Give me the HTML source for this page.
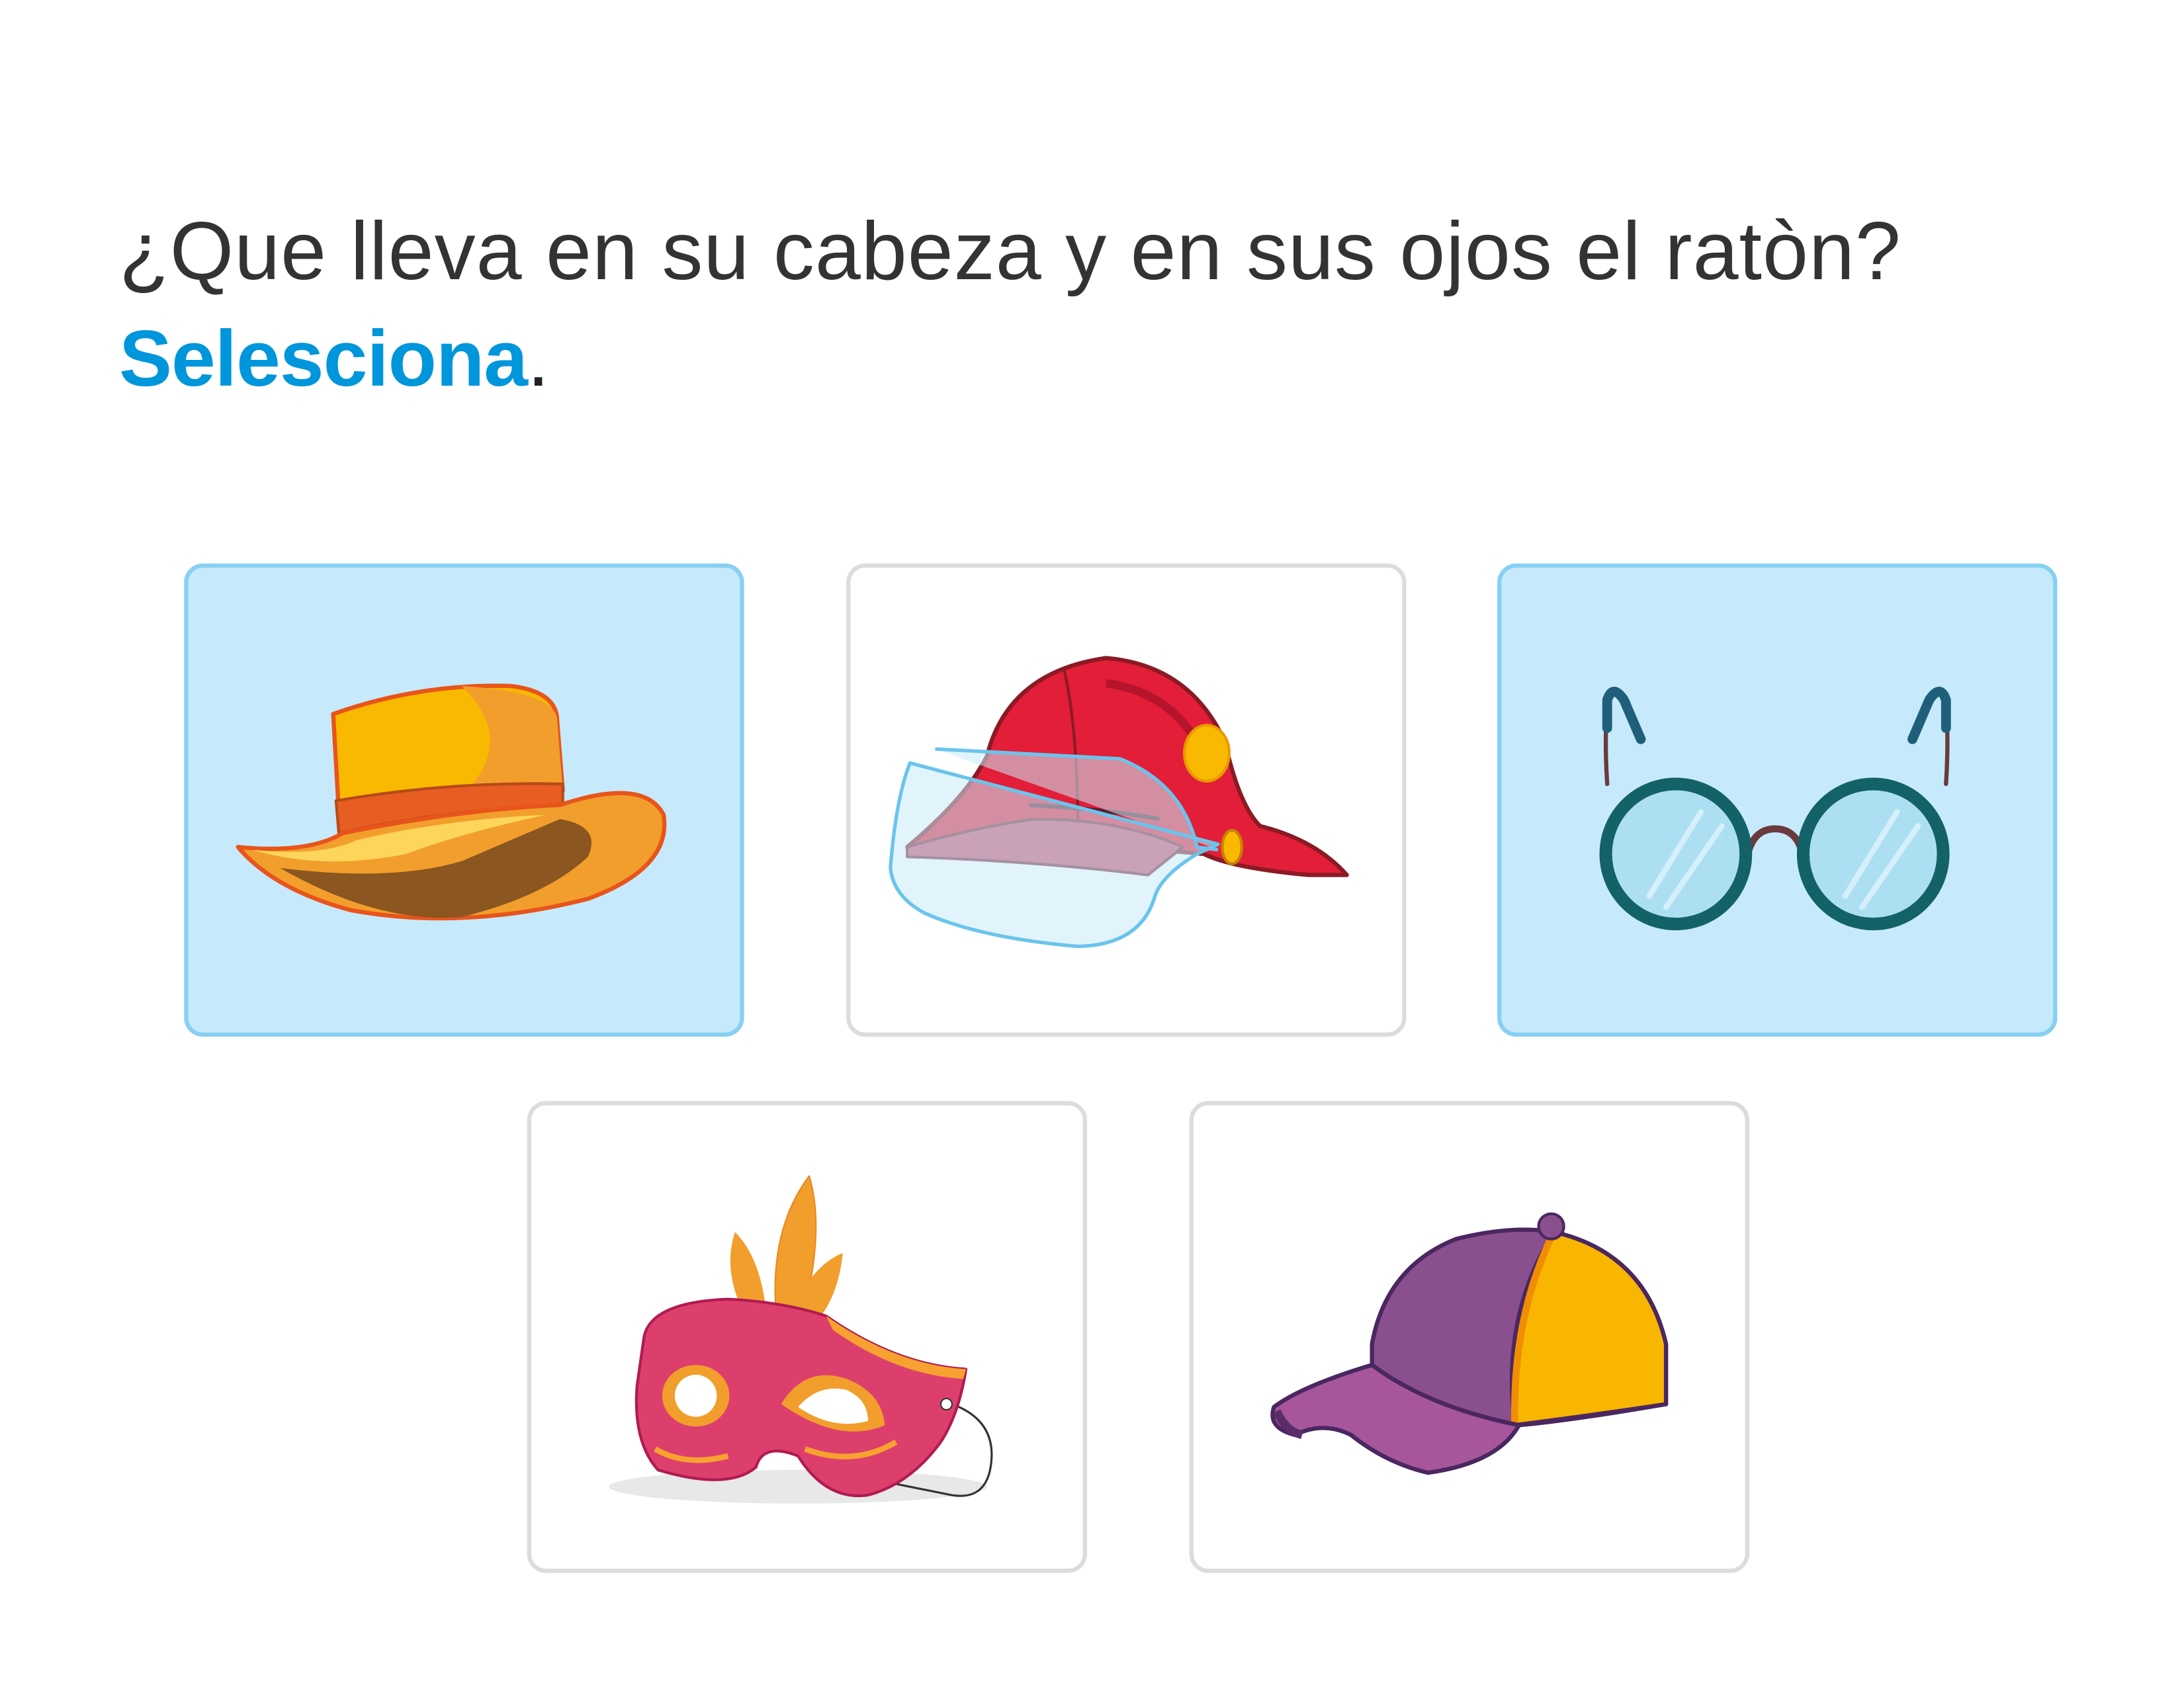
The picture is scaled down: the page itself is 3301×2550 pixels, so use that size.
<!DOCTYPE html>
<html><head><meta charset="utf-8"><style>
html,body{margin:0;padding:0;background:#fff;}
body{width:3301px;height:2550px;position:relative;overflow:hidden;font-family:"Liberation Sans",sans-serif;}
.q{position:absolute;left:180px;top:300px;font-size:124px;color:#333;line-height:160px;white-space:nowrap;letter-spacing:1px;}
.s{position:absolute;left:180px;top:462px;font-size:120px;line-height:160px;font-weight:bold;color:#0096db;white-space:nowrap;letter-spacing:-1px;}
.s span{color:#222;font-weight:normal;}
svg{position:absolute;left:0;top:0;}
</style></head><body>
<svg width="3301" height="2550" viewBox="0 0 1560 1205" xmlns="http://www.w3.org/2000/svg">
<rect x="133" y="404" width="397" height="335" rx="12" fill="#c6eafb" stroke="#87d0f2" stroke-width="3"/>
<rect x="606" y="404" width="397" height="335" rx="12" fill="#fff" stroke="#dcdcdc" stroke-width="3"/>
<rect x="1071" y="404" width="397" height="335" rx="12" fill="#c6eafb" stroke="#87d0f2" stroke-width="3"/>
<rect x="378" y="788" width="397" height="334" rx="12" fill="#fff" stroke="#dcdcdc" stroke-width="3"/>
<rect x="851" y="788" width="397" height="334" rx="12" fill="#fff" stroke="#dcdcdc" stroke-width="3"/>

<g stroke-linejoin="round">
<path d="M238 510 Q300 488 365 490 Q398 494 398 515 L402 565 L242 580 Z" fill="#f9b900" stroke="#e8541b" stroke-width="3"/>
<path d="M330 490 Q398 494 398 515 L402 565 L330 568 Q370 530 330 490Z" fill="#f29e2c"/>
<path d="M240 572 Q320 558 402 560 L402 575 Q320 578 242 595 Z" fill="#e85d22" stroke="#b54a1a" stroke-width="2"/>
<path d="M170 605 Q220 610 245 595 Q330 578 400 575 Q460 555 474 582 Q480 620 420 642 Q330 665 250 650 Q195 635 170 605Z" fill="#f29e2c" stroke="#e8541b" stroke-width="3"/>
<path d="M200 620 Q280 630 330 615 L400 585 Q430 590 420 612 Q390 640 330 655 Q270 660 200 620Z" fill="#8b561f"/>
<path d="M180 607 Q230 612 255 600 Q320 585 390 582 Q330 595 290 610 Q230 622 180 607Z" fill="#fcd55a"/>
</g>

<g stroke-linejoin="round">
<path d="M648 605 Q690 570 705 540 Q720 480 790 470 Q850 475 875 530 Q885 575 900 590 Q940 600 962 625 L935 625 Q880 620 860 610 Q760 600 648 605Z" fill="#e31e38" stroke="#8b1a24" stroke-width="3"/>
<path d="M760 478 Q770 520 770 600" stroke="#8b1a24" stroke-width="2" fill="none"/>
<path d="M790 488 Q840 495 860 540" stroke="#b5142c" stroke-width="6" fill="none"/>
<ellipse cx="862" cy="538" rx="16" ry="20" fill="#f9b900" stroke="#e89a00" stroke-width="2"/>
<path d="M648 605 Q700 590 740 585 Q800 585 845 605 L820 625 Q740 615 648 612Z" fill="#c94a68" stroke="#7a2435" stroke-width="2"/>
<path d="M735 575 Q790 578 828 585" stroke="#5a2030" stroke-width="3" fill="none"/>
<ellipse cx="880" cy="605" rx="7" ry="12" fill="#f9b900" stroke="#c98000" stroke-width="2"/>
<path d="M668 535 L800 542 Q845 560 855 605 L870 607 M870 603 L855 610 Q830 625 825 640 Q815 675 770 676 Q700 670 660 652 Q638 640 636 620 Q640 570 650 545 Z" fill="rgba(200,235,250,0.55)" stroke="#6ac4ec" stroke-width="2.5"/>
</g>

<g fill="none" stroke-linecap="round">
<path d="M1148 560 Q1146 530 1148 500" stroke="#6b3a3e" stroke-width="3"/>
<path d="M1390 560 Q1392 530 1390 500" stroke="#6b3a3e" stroke-width="3"/>
<path d="M1148 520 L1148 500 Q1152 488 1160 500 L1172 528" stroke="#1f5f7a" stroke-width="7"/>
<path d="M1390 520 L1390 500 Q1386 488 1378 500 L1366 528" stroke="#1f5f7a" stroke-width="7"/>
<path d="M1248 612 Q1252 592 1268 592 Q1284 592 1288 612" stroke="#6b3a3e" stroke-width="5"/>
<ellipse cx="1197" cy="610" rx="50" ry="50" fill="#addff3" stroke="#136268" stroke-width="9"/>
<ellipse cx="1338" cy="610" rx="50" ry="50" fill="#addff3" stroke="#136268" stroke-width="9"/>
<path d="M1178 640 L1215 580 M1190 648 L1230 590" stroke="#d4f0fb" stroke-width="4"/>
<path d="M1318 640 L1355 580 M1330 648 L1370 590" stroke="#d4f0fb" stroke-width="4"/>
</g>

<g stroke-linejoin="round">
<ellipse cx="570" cy="1062" rx="135" ry="12" fill="#e8e8e8"/>
<path d="M670 1000 Q712 1010 708 1045 Q705 1072 680 1068 Q650 1062 640 1060" fill="none" stroke="#333" stroke-width="1.5"/>
<path d="M578 840 Q590 880 572 945 L555 945 Q548 880 578 840Z" fill="#f29e2c" stroke="#e8881e" stroke-width="1"/>
<path d="M525 880 Q545 900 548 945 L535 945 Q515 910 525 880Z" fill="#f29e2c"/>
<path d="M602 895 Q598 935 572 955 L565 940 Q578 905 602 895Z" fill="#f29e2c"/>
<path d="M460 955 Q465 930 520 928 Q560 930 590 940 Q640 975 690 978 Q685 1010 672 1030 Q650 1060 620 1068 Q590 1072 570 1040 Q545 1030 540 1048 Q520 1065 470 1050 Q452 1030 455 990 Z" fill="#dd3f6c" stroke="#b01b52" stroke-width="2"/>
<path d="M590 940 Q640 975 690 978 L688 985 Q640 982 595 950Z" fill="#f7a230"/>
<ellipse cx="497" cy="997" rx="24" ry="22" fill="#f29e2c"/>
<ellipse cx="497" cy="997" rx="15" ry="15" fill="#fff"/>
<path d="M558 1003 Q575 975 605 985 Q630 995 632 1018 Q600 1032 558 1003Z" fill="#f29e2c"/>
<path d="M570 1005 Q585 988 605 993 Q620 1000 620 1015 Q595 1022 570 1005Z" fill="#fff"/>
<path d="M468 1035 Q490 1048 520 1040 M575 1035 Q610 1048 640 1030" stroke="#f7a230" stroke-width="4" fill="none"/>
<circle cx="676" cy="1003" r="4" fill="#fff" stroke="#333" stroke-width="1"/>
</g>

<g stroke-linejoin="round">
<path d="M980 960 Q990 905 1040 885 Q1080 875 1110 880 Q1175 895 1190 960 L1190 1003 Q1120 1015 1085 1018 Q1020 1005 980 975Z" fill="#8a4f8e" stroke="#4a2760" stroke-width="3"/>
<path d="M1110 880 Q1175 895 1190 960 L1190 1003 Q1130 1012 1082 1018 Q1072 940 1110 880Z" fill="#f9b600" stroke="#4a2760" stroke-width="3"/>
<path d="M1110 880 Q1080 940 1082 1018" stroke="#f08d00" stroke-width="5" fill="none"/>
<ellipse cx="1108" cy="876" rx="9" ry="9" fill="#8a4f8e" stroke="#4a2760" stroke-width="2"/>
<path d="M980 975 Q1020 1005 1085 1018 Q1070 1045 1020 1052 Q990 1045 965 1025 Q945 1015 925 1025 Q905 1020 910 1005 Q930 990 980 975Z" fill="#a7569c" stroke="#4a2760" stroke-width="3"/>
<path d="M912 1008 Q918 1022 930 1025" stroke="#5a2d6a" stroke-width="6" fill="none"/>
</g>
</svg>
<div class="q">¿Que lleva en su cabeza y en sus ojos el ratòn?</div>
<div class="s">Selesciona<span>.</span></div>
</body></html>
